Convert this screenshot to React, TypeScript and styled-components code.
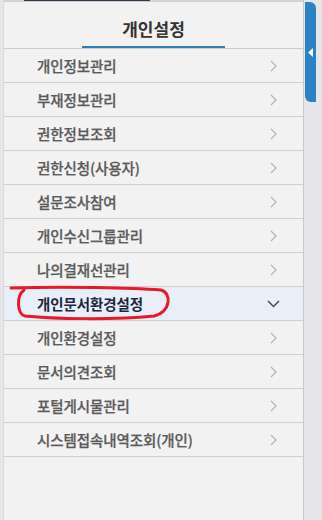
import React from 'react';
import styled, { createGlobalStyle } from 'styled-components';

const GlobalStyle = createGlobalStyle`
	html, body {
		margin: 0;
		padding: 0;
		background: #e6e6e8;
		font-family: 'Noto Sans CJK KR', 'Noto Sans', sans-serif;
	}
`;

const Page = styled.div`
	display: flex;
	height: 520px;
	width: 322px;
	padding-left: 3px;
	box-sizing: border-box;
`;

const Panel = styled.div`
	width: 301px;
	height: 520px;
	background: #f2f2f2;
	border-left: 1px solid #dcdcdc;
	border-right: 1px solid #c8c8c8;
	box-sizing: border-box;
	display: flex;
	flex-direction: column;
`;

const TopStrip = styled.div`
	display: flex;
	height: 2px;
	border-bottom: 1px solid #cfcfcf;
	box-sizing: border-box;
`;

const StripPart = styled.div<{ $color: string; $width?: number }>`
	background: ${(p) => p.$color};
	${(p) => (p.$width ? `width: ${p.$width}px;` : 'flex: 1;')}
`;

const TitleBox = styled.div`
	height: 46px;
	display: flex;
	flex-direction: column;
	align-items: center;
	justify-content: flex-end;
	border-bottom: 1px solid #cccccc;
`;

const Title = styled.h2`
	margin: 0 0 6px;
	font-size: 17px;
	font-weight: 700;
	color: #333333;
	line-height: 22px;
`;

const TitleBar = styled.div`
	width: 143px;
	height: 2px;
	background: #2a7fc0;
`;

const MenuList = styled.ul`
	list-style: none;
	margin: 0;
	padding: 0;
`;

const MenuRow = styled.li<{ $active?: boolean }>`
	position: relative;
	height: 34px;
	box-sizing: border-box;
	border-bottom: 1px solid #cfcfcf;
	display: flex;
	align-items: center;
	justify-content: space-between;
	padding: 0 26px 0 33px;
	background: ${(p) => (p.$active ? '#e9eff8' : 'transparent')};
	color: ${(p) => (p.$active ? '#1b2640' : '#5a5a5a')};
	font-size: 14.5px;
	font-weight: ${(p) => (p.$active ? 700 : 500)};
	-webkit-text-stroke: ${(p) => (p.$active ? '0' : '0.25px')};
	letter-spacing: -0.1px;
`;

const Mark = styled.svg`
	position: absolute;
	left: 0;
	top: 0;
	overflow: visible;
	pointer-events: none;
`;

const Side = styled.div`
	flex: 1;
	padding-top: 2px;
	padding-left: 1px;
`;

const Tab = styled.div`
	width: 11px;
	height: 100px;
	background: #2b82c4;
	border-radius: 0 6px 0 6px;
	display: flex;
	align-items: center;
	justify-content: center;
`;

const ChevronRight = () => (
	<svg width="7" height="12" viewBox="0 0 7 12">
		<polyline points="1,1 6,6 1,11" fill="none" stroke="#b4b4b4" strokeWidth="1.2" />
	</svg>
);

const ChevronDown = () => (
	<svg width="13" height="8" viewBox="0 0 13 8" style={{ marginRight: -3 }}>
		<polyline points="1,1 6.5,6.5 12,1" fill="none" stroke="#4a4a4a" strokeWidth="1.5" />
	</svg>
);

const items = [
	'개인정보관리',
	'부재정보관리',
	'권한정보조회',
	'권한신청(사용자)',
	'설문조사참여',
	'개인수신그룹관리',
	'나의결재선관리',
	'개인문서환경설정',
	'개인환경설정',
	'문서의견조회',
	'포털게시물관리',
	'시스템접속내역조회(개인)',
];

const ACTIVE = '개인문서환경설정';

const App: React.FC = () => (
	<>
		<GlobalStyle />
		<Page>
			<Panel>
				<TopStrip>
					<StripPart $color="#d4d4d4" $width={20} />
					<StripPart $color="#2b3a4e" $width={126} />
					<StripPart $color="#d4d4d4" />
				</TopStrip>
				<TitleBox>
					<Title>개인설정</Title>
					<TitleBar />
				</TitleBox>
				<MenuList>
					{items.map((label) => {
						const active = label === ACTIVE;
						return (
							<MenuRow key={label} $active={active}>
								<span>{label}</span>
								{active ? <ChevronDown /> : <ChevronRight />}
								{active && (
									<Mark width="180" height="34" viewBox="0 0 180 34">
										<path
											d="M7 1 C60 -1 130 1 157 3 C168 6 167 25 150 29 C110 33 50 32 21 29 C13 27 12 9 20 3"
											fill="none"
											stroke="#e8192c"
											strokeWidth="3"
											strokeLinecap="round"
										/>
									</Mark>
								)}
							</MenuRow>
						);
					})}
				</MenuList>
			</Panel>
			<Side>
				<Tab>
					<svg width="5" height="9" viewBox="0 0 5 9">
						<polygon points="5,0 0,4.5 5,9" fill="#ffffff" />
					</svg>
				</Tab>
			</Side>
		</Page>
	</>
);

export default App;
